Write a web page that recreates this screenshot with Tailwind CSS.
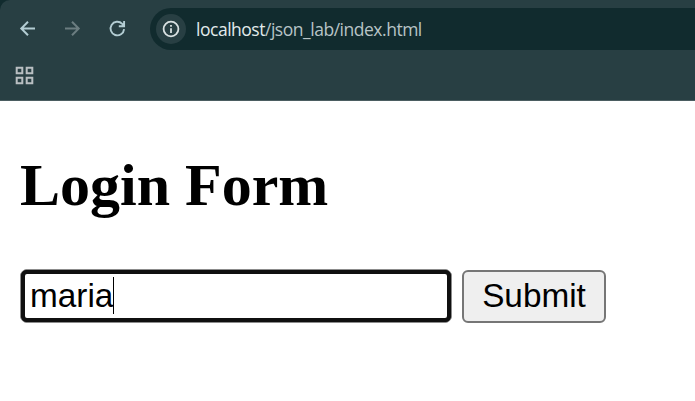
<!DOCTYPE html>
<html lang="en">
<head>
<meta charset="utf-8">
<title>Login Form</title>
<script src="https://cdn.jsdelivr.net/npm/@tailwindcss/browser@4"></script>
</head>
<body class="h-[401px] overflow-hidden bg-white text-black">
<header class="h-[101px] bg-[#112b2e]">
  <div class="h-full rounded-tl-[10px] border-b border-[#4b5d61] bg-[#283f43] pt-2">
    <div class="flex h-[42px] items-center">
      <svg class="ml-[18px] h-5 w-5 shrink-0" viewBox="0 0 20 20" fill="none" stroke="#b3cdd3" stroke-width="2"><path d="M17 9.5H3.5M10 2.8L3.3 9.5L10 16.2"/></svg>
      <svg class="ml-[25px] h-5 w-5 shrink-0" viewBox="0 0 20 20" fill="none" stroke="#6b7d80" stroke-width="2"><path d="M2 9.5H15.5M9 2.8L15.7 9.5L9 16.2"/></svg>
      <svg class="ml-[25px] h-5 w-5 shrink-0" viewBox="0 0 20 20" fill="none" stroke="#b3cdd3" stroke-width="1.9"><path d="M16.1 10.2A6.8 6.8 0 1 1 14.2 4.8L16 6.6M16.1 2V7.2H10.8"/><path d="M16.5 3.8V7.5H12.8Z" fill="#b3cdd3" stroke="none"/></svg>
      <div class="ml-[22px] flex h-[42px] grow items-center rounded-l-full bg-[#112b2e] pl-1.5">
        <div class="flex h-[30px] w-[30px] shrink-0 items-center justify-center rounded-full bg-[#283f43]">
          <svg class="h-[18px] w-[18px]" viewBox="0 0 18 18" fill="none" stroke="#d9e1e2" stroke-width="1.8"><circle cx="9" cy="9" r="7.4"/><path d="M9 8.2V13M9 5V6.8"/></svg>
        </div>
        <div class="ml-[10px] whitespace-nowrap font-['Open_Sans',sans-serif] text-[17.5px] leading-6 tracking-[-0.48px] text-[#b8c4c6]"><span class="text-[#e2eaeb]">localhost</span>/json_lab/index.html</div>
      </div>
    </div>
    <svg class="ml-[15px] mt-4 h-[19px] w-[19px]" viewBox="0 0 19 19" fill="none" stroke="#b9bfc2" stroke-width="2"><path d="M1.7 1.7H7.3V7.3H1.7ZM11.7 1.7H17.3V7.3H11.7ZM1.7 11.7H7.3V17.3H1.7ZM11.7 11.7H17.3V17.3H11.7Z"/></svg>
  </div>
</header>
<main class="pl-5 pt-[50px]">
  <h1 class="font-['Liberation_Serif',serif] text-[60px] font-bold leading-[68px]">Login Form</h1>
  <form class="mt-[50px] flex gap-[10px] font-['Liberation_Sans',sans-serif] text-[33.33px]">
    <div class="flex h-[54px] w-[432px] items-center rounded-[7px] border border-[#8c8c8c] bg-[#101010]">
      <div class="flex h-full w-full items-center rounded-[6px] border-4 border-[#101010] bg-white pb-0.5 pl-[5px]"><span class="pt-0.5">maria</span><span class="h-[37px] w-px bg-black"></span></div>
    </div>
    <button type="button" class="mt-px flex h-[53px] w-[144px] items-center justify-center rounded-[6px] border-2 border-[#767676] bg-[#efefef] pb-0.5">Submit</button>
  </form>
</main>
</body>
</html>
